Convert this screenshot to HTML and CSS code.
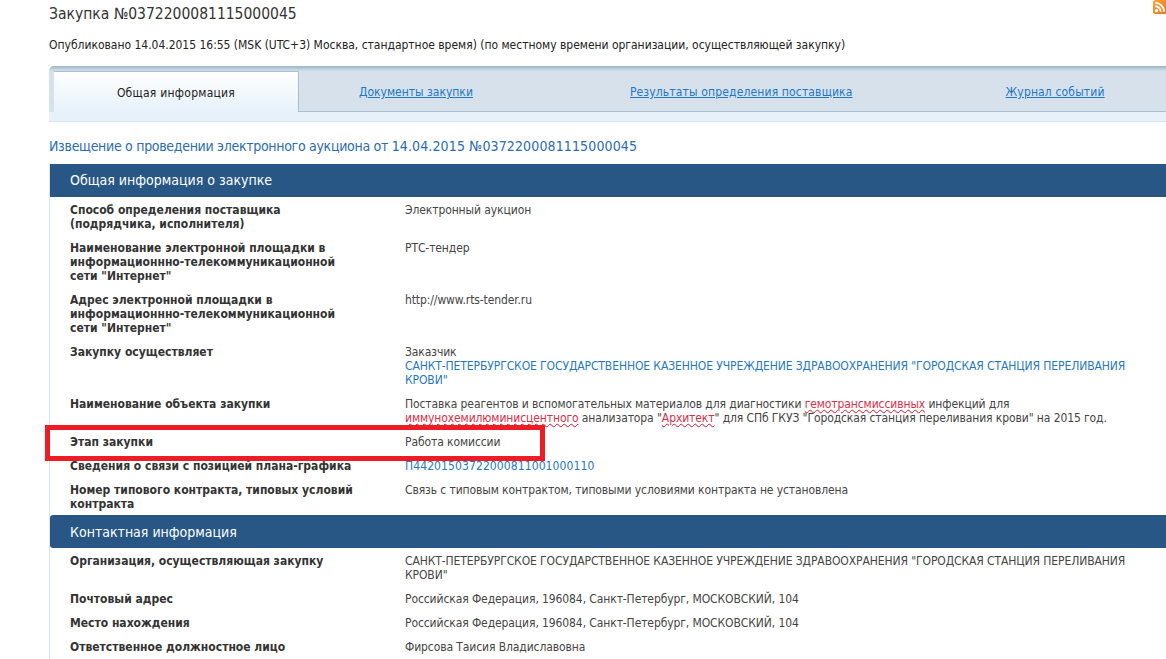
FILE: index.html
```html
<!DOCTYPE html>
<html lang="ru">
<head>
<meta charset="utf-8">
<title>Закупка</title>
<link rel="stylesheet" href="styles.css">
</head>
<body>
<svg class="rss" width="14" height="14" viewBox="0 0 14 14"><defs><linearGradient id="rg" x1="0" y1="0" x2="1" y2="1"><stop offset="0" stop-color="#f9a53a"/><stop offset="1" stop-color="#e5761a"/></linearGradient></defs><rect width="14" height="14" rx="2.5" fill="url(#rg)"/><circle cx="3.6" cy="10.6" r="1.6" fill="#fff"/><path d="M2.2 6.2a5.6 5.6 0 0 1 5.6 5.6M2.2 2.9a8.9 8.9 0 0 1 8.9 8.9" fill="none" stroke="#fff" stroke-width="1.9"/></svg>
<main class="page">
  <h1 class="title">Закупка №0372200081115000045</h1>
  <p class="published">Опубликовано 14.04.2015 16:55 (MSK (UTC+3) Москва, стандартное время) (по местному времени организации, осуществляющей закупку)</p>
  <nav class="tabs">
    <div class="tabrow">
      <span class="tab active">Общая информация</span>
      <a class="tab t2" href="#">Документы закупки</a>
      <a class="tab t3" href="#">Результаты определения поставщика</a>
      <a class="tab t4" href="#">Журнал событий</a>
    </div>
  </nav>
  <h2 class="notice">Извещение о проведении электронного аукциона от <span class="digits">14.04.2015 №0372200081115000045</span></h2>
  <div class="content">
    <h3 class="head">Общая информация о закупке</h3>
    <dl class="rows first">
      <dt>Способ определения поставщика<br>(подрядчика, исполнителя)</dt><dd>Электронный аукцион</dd>
      <dt>Наименование электронной площадки в информационнно-телекоммуникационной сети "Интернет"</dt><dd>РТС-тендер</dd>
      <dt>Адрес электронной площадки в информационнно-телекоммуникационной сети "Интернет"</dt><dd>http://www.rts-tender.ru</dd>
      <dt>Закупку осуществляет</dt><dd>Заказчик<br><a href="#">САНКТ-ПЕТЕРБУРГСКОЕ ГОСУДАРСТВЕННОЕ КАЗЕННОЕ УЧРЕЖДЕНИЕ ЗДРАВООХРАНЕНИЯ "ГОРОДСКАЯ СТАНЦИЯ ПЕРЕЛИВАНИЯ КРОВИ"</a></dd>
      <dt>Наименование объекта закупки</dt><dd>Поставка реагентов и вспомогательных материалов для диагностики <span class="sp">гемотрансмиссивных</span> инфекций для <span class="sp">иммунохемилюминисцентного</span> анализатора "<span class="sp">Архитект</span>" для СПб ГКУЗ "Городская станция переливания крови" на 2015 год.</dd>
      <dt>Этап закупки</dt><dd>Работа комиссии</dd>
      <dt>Сведения о связи с позицией плана-графика</dt><dd><a class="num" href="#">П44201503722000811001000110</a></dd>
      <dt>Номер типового контракта, типовых условий контракта</dt><dd>Связь с типовым контрактом, типовыми условиями контракта не установлена</dd>
    </dl>
    <h3 class="head second">Контактная информация</h3>
    <dl class="rows">
      <dt>Организация, осуществляющая закупку</dt><dd>САНКТ-ПЕТЕРБУРГСКОЕ ГОСУДАРСТВЕННОЕ КАЗЕННОЕ УЧРЕЖДЕНИЕ ЗДРАВООХРАНЕНИЯ "ГОРОДСКАЯ СТАНЦИЯ ПЕРЕЛИВАНИЯ КРОВИ"</dd>
      <dt>Почтовый адрес</dt><dd>Российская Федерация, 196084, Санкт-Петербург, МОСКОВСКИЙ, 104</dd>
      <dt>Место нахождения</dt><dd>Российская Федерация, 196084, Санкт-Петербург, МОСКОВСКИЙ, 104</dd>
      <dt>Ответственное должностное лицо</dt><dd>Фирсова Таисия Владиславовна</dd>
    </dl>
    <div class="mark"></div>
  </div>
</main>
</body>
</html>
```
FILE: styles.css
```css
html, body { margin: 0; padding: 0; height: 659px; overflow: hidden; background: #fff; }
body { font-family: "DejaVu Sans Condensed", "DejaVu Sans", sans-serif; font-size: 12px; line-height: 14px; color: #333; position: relative; }
.rss { position: absolute; left: 1153px; top: 0; }
.page { padding: 5px 0 0 49px; }
.title { margin: 0; font-size: 15.5px; font-weight: normal; line-height: 18px; color: #333; }
.published { margin: 15px 0 0; color: #222; height: 14px; white-space: nowrap; letter-spacing: -0.02px; }
.tabs { margin-top: 14px; height: 56px; box-sizing: border-box; border-radius: 5px 0 0 0; background: linear-gradient(#9bb3c6, #c9d8e3 4px, #d6e1eb 5px, #d6e1eb 46px, #e6f1fa 46px); border-bottom: 1px solid #dfe6ec; padding: 5px 0 0 5px; }
.tabrow { display: flex; height: 41px; align-items: center; border-bottom: 1px solid #a9bfcf; box-sizing: border-box; }
.tab { display: block; text-align: center; color: #1f78c1; padding-top: 2px; }
.tab.active { width: 245px; box-sizing: border-box; height: 41px; padding-top: 14px; background: linear-gradient(#fff, #e6f1fa); border: 1px solid #a9bfcf; border-width: 1px 1px 0 0; color: #222; letter-spacing: 0.25px; }
.t2 { margin-left: 60px; }
.t3 { margin-left: 157px; letter-spacing: 0.15px; }
.t4 { margin-left: 153px; letter-spacing: 0.15px; }
.notice { margin: 16px 0 0; font-size: 14px; font-weight: normal; line-height: 16px; color: #2a6cb0; white-space: nowrap; letter-spacing: -0.3px; }
.digits { letter-spacing: 0.13px; }
.content { position: relative; margin-top: 10px; border-left: 1px solid #dbe4ec; }
.head { margin: 0; height: 33px; background: #285786; color: #fff; font-size: 14px; font-weight: normal; line-height: 33px; padding-left: 20px; }
.head.second { line-height: 35px; border-radius: 3px 0 0 3px; }
.rows { display: grid; grid-template-columns: 335px 1fr; margin: 0; padding: 1px 30px 0 20px; }
.rows.first { margin-bottom: -1px; }
.rows dt { font-weight: bold; padding: 5px 50px 5px 0; color: #333; }
.rows dd { margin: 0; padding: 5px 0; color: #444; letter-spacing: -0.1px; }
.rows a { color: #1f78c1; text-decoration: none; }
.rows .num { letter-spacing: 0.1px; }
.sp { color: #d8304a; text-decoration: underline wavy #e8102a 1px; text-underline-offset: 1px; }
.mark { position: absolute; left: -5px; top: 261px; width: 490px; height: 26px; border: 5px solid #ee1c25; }
```
